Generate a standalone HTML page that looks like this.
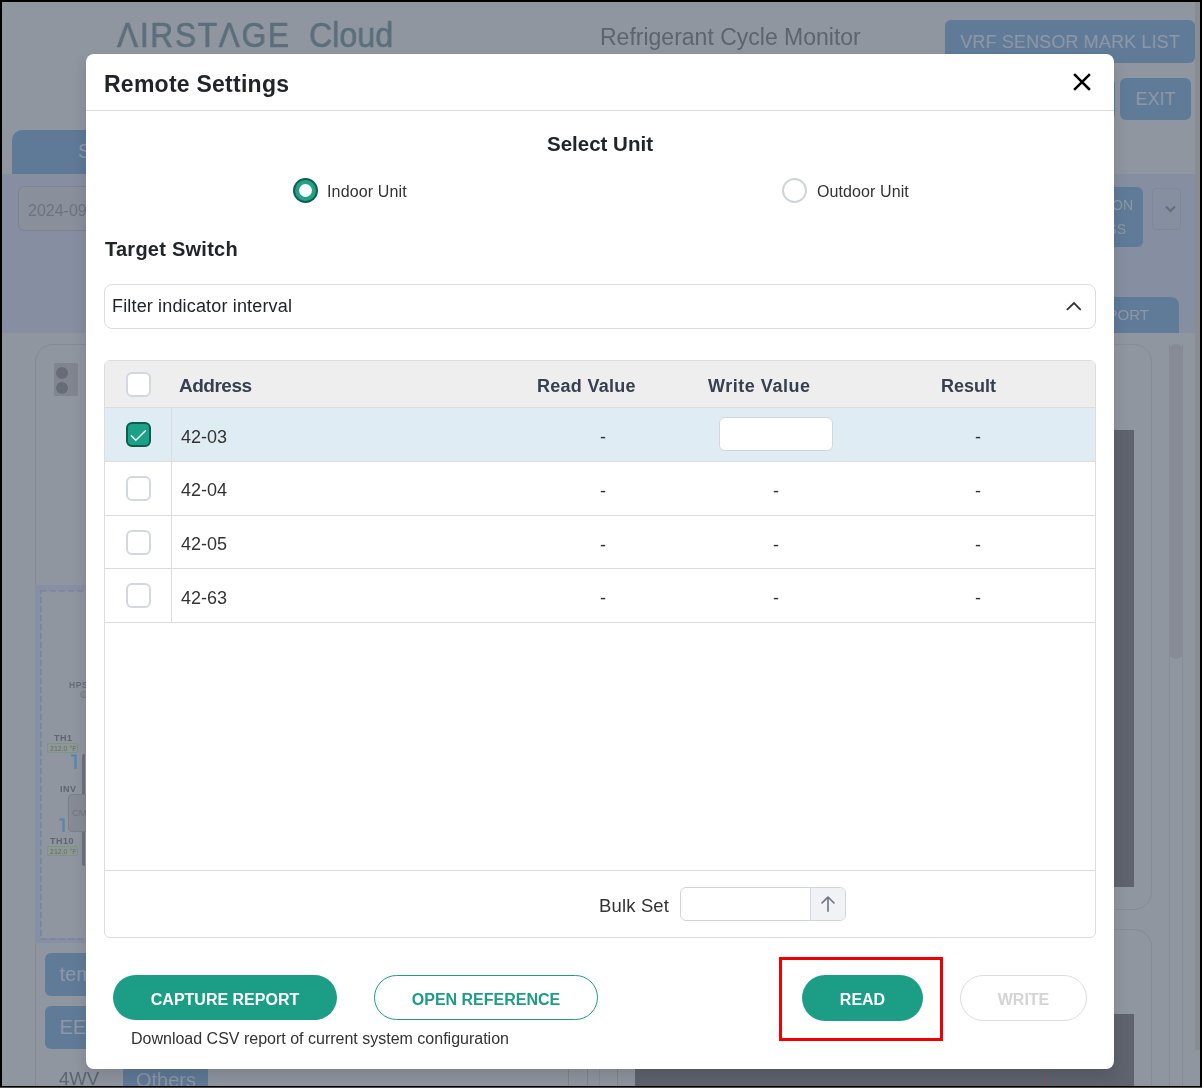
<!DOCTYPE html>
<html><head><meta charset="utf-8">
<style>.t{will-change:transform}
*{box-sizing:border-box;margin:0;padding:0}
html,body{width:1202px;height:1088px;overflow:hidden;background:#000}
body{position:relative;font-family:"Liberation Sans",sans-serif}
.a{position:absolute}
#page{position:absolute;left:2px;top:2px;width:1198px;height:1084px;background:#9096a0;overflow:hidden}
.bbtn{position:absolute;background:#607b98;border-radius:6px;color:#8e97a5;font-size:18px;white-space:nowrap}
#modal{position:absolute;left:86px;top:54px;width:1028px;height:1015px;background:#fff;border-radius:8px;overflow:hidden;box-shadow:0 8px 16px rgba(0,0,0,.13)}
.t{position:absolute;white-space:nowrap;line-height:1}
</style></head>
<body>
<div id="page">
  <!-- header -->
  <div class="t" style="left:114.8px;top:15.4px;font-size:35px;color:#5a6f7b;letter-spacing:2px;transform:scaleX(0.9);transform-origin:0 0;-webkit-text-stroke:0.7px #5a6f7b">ΛIRSTΛGE</div>
  <div class="t" style="left:307px;top:15.4px;font-size:35px;color:#5a6f7b;transform:scaleX(0.92);transform-origin:0 0;-webkit-text-stroke:0.6px #5a6f7b">Cloud</div>
  <div class="t" style="left:598px;top:24px;font-size:23px;color:#5c6470">Refrigerant Cycle Monitor</div>
  <div class="bbtn" style="left:943px;top:18px;width:250px;height:43px;line-height:45px;text-align:center;letter-spacing:0.13px">VRF SENSOR MARK LIST</div>
  <div class="bbtn" style="left:1040px;top:76px;width:73px;height:42px"></div>
  <div class="bbtn" style="left:1118px;top:76px;width:71px;height:42px;line-height:42px;text-align:center">EXIT</div>
  <!-- tab -->
  <div class="a" style="left:9.5px;top:128px;width:200px;height:44px;background:#5f7a97;border-radius:10px 10px 0 0"></div>
  <div class="t" style="left:76px;top:139px;font-size:20px;color:#8e97a5">S</div>
  <!-- band -->
  <div class="a" style="left:0;top:172px;width:1193px;height:159px;background:#858fa1"></div>
  <div class="a" style="left:16px;top:184px;width:120px;height:45px;border:1px solid #7c8391;border-radius:6px;background:#8a909b"></div>
  <div class="t" style="left:26px;top:200.5px;font-size:16px;color:#6e737d">2024-09-01</div>
  <div class="bbtn" style="left:1000px;top:185px;width:141px;height:60px"></div>
  <div class="t" style="left:1031px;top:195.5px;width:100px;text-align:right;font-size:14px;color:#8e97a5">SON</div><div class="t" style="left:1024px;top:219.5px;width:100px;text-align:right;font-size:14px;color:#8e97a5">SS</div>
  <div class="a" style="left:1150px;top:186px;width:29px;height:42px;border:1px solid #7f8898;border-radius:4px;background:#868fa0"></div>
  <svg class="a" style="left:1162px;top:202px" width="13" height="10" viewBox="0 0 13 10"><path d="M2 2.5 L6.5 7 L11 2.5" fill="none" stroke="#676e7b" stroke-width="2"/></svg>
  <div class="bbtn" style="left:1000px;top:295px;width:177px;height:36px;border-radius:8px 8px 0 0"></div>
  <div class="t" style="left:1046.5px;top:305.4px;width:100px;text-align:right;font-size:15px;color:#8e97a5">PORT</div>
  <!-- left card -->
  <div class="a" style="left:32.5px;top:342px;width:534px;height:760px;border:1px solid #848993;border-radius:18px"></div>
  <div class="a" style="left:33px;top:583px;width:533px;height:358px;background:#868fa4"></div>
  <div class="a" style="left:39px;top:589px;width:521px;height:347px;background:#9096a0"></div>
  <svg class="a" style="left:38px;top:588px" width="524" height="350"><rect x="1" y="1" width="522" height="348" fill="none" stroke="#74809c" stroke-width="1.2" stroke-dasharray="6 3"/></svg>
  <!-- outdoor unit icon -->
  <div class="a" style="left:52px;top:361px;width:24px;height:33px;background:#818590;border-radius:1px"></div>
  <div class="a" style="left:53.5px;top:364.5px;width:12px;height:12px;background:#676c78;border-radius:50%"></div>
  <div class="a" style="left:53.5px;top:380px;width:12px;height:12px;background:#676c78;border-radius:50%"></div>
  <!-- diagram bits -->
  <div class="t" style="left:67px;top:679px;font-size:8.5px;font-weight:bold;letter-spacing:0.6px;color:#666b75">HPS</div>
  <div class="a" style="left:78px;top:689px;width:20px;height:7px;background:#878c96;border-radius:4px;border:1px solid #7b808a"></div>
  <div class="t" style="left:52px;top:732px;font-size:9px;font-weight:bold;letter-spacing:0.5px;color:#60656f">TH1</div>
  <div class="a" style="left:45px;top:741px;width:31px;height:10px;background:#8d9a93;border:1px solid #7e9486;border-radius:2px"></div>
  <div class="t" style="left:48px;top:742.5px;font-size:7px;color:#666b73">212.0 °F</div>
  <svg class="a" style="left:68px;top:752px" width="8" height="16" viewBox="0 0 8 16"><path d="M1 1.5 H5.5 V15" fill="none" stroke="#5c86b0" stroke-width="2.5"/></svg>
  <div class="a" style="left:80px;top:752px;width:3px;height:112px;background:#6e737d;border-radius:2px 0 0 2px"></div>
  <div class="t" style="left:58px;top:783px;font-size:9px;font-weight:bold;letter-spacing:0.5px;color:#60656f">INV</div>
  <div class="a" style="left:66px;top:792px;width:26px;height:38px;background:#868b95;border:1px solid #7a7f89;border-radius:4px"></div>
  <div class="t" style="left:70px;top:806px;font-size:9.5px;color:#72777f">CM</div>
  <svg class="a" style="left:57px;top:816px" width="8" height="15" viewBox="0 0 8 15"><path d="M0.5 1.5 H4.5 V14" fill="none" stroke="#5c86b0" stroke-width="2.5"/></svg>
  <div class="t" style="left:48px;top:835px;font-size:9px;font-weight:bold;letter-spacing:0.5px;color:#60656f">TH10</div>
  <div class="a" style="left:45px;top:844px;width:31px;height:10px;background:#8d9a93;border:1px solid #7e9486;border-radius:2px"></div>
  <div class="t" style="left:48px;top:845.5px;font-size:7px;color:#666b73">212.0 °F</div>
  <!-- right cards -->
  <div class="a" style="left:597px;top:342px;width:553px;height:566px;border:1px solid #868b96;border-radius:18px"></div>
  <div class="a" style="left:597px;top:927px;width:553px;height:300px;border:1px solid #868b96;border-radius:18px"></div>
  <div class="a" style="left:566px;top:1060px;width:1px;height:30px;background:#80858f"></div>
  <div class="a" style="left:585px;top:1060px;width:1px;height:30px;background:#80858f"></div>
  <div class="a" style="left:615px;top:1060px;width:1px;height:30px;background:#80858f"></div>
  <div class="a" style="left:633px;top:428px;width:499px;height:457px;background:#5e636e"></div>
  <div class="a" style="left:633px;top:1012px;width:499px;height:80px;background:#5e636e"></div>
  <div class="a" style="left:1041.5px;top:1012px;width:1px;height:80px;background:#8a5060"></div>
  
  <!-- scroll tracks -->
  <div class="a" style="left:1167px;top:342px;width:1px;height:760px;background:#868b95"></div>
  <div class="a" style="left:1180px;top:342px;width:1px;height:760px;background:#868b95"></div>
  <div class="a" style="left:1167px;top:342px;width:14px;height:315px;background:#878b96;border-radius:7px"></div>
  <div class="a" style="left:1193px;top:0;width:5px;height:1048px;background:#888c93"></div>
  <!-- left bottom buttons -->
  <div class="bbtn" style="left:43px;top:951px;width:200px;height:43px;line-height:43px;padding-left:14.5px;font-size:20px">temp</div>
  <div class="bbtn" style="left:43px;top:1004px;width:200px;height:43px;line-height:43px;padding-left:14.5px;font-size:20px">EEV</div>
  <div class="t" style="left:57px;top:1068px;font-size:18.5px;color:#5c6470">4WV</div>
  <div class="a" style="left:121px;top:1067px;width:85px;height:30px;background:#607b98"></div>
  <div class="t" style="left:134px;top:1068px;font-size:20px;color:#8e97a5">Others</div>
</div>

<div class="a" style="left:0;top:1087px;width:1202px;height:1px;background:#4d4d4d"></div>
<div id="modal">
  <div class="t" style="left:18px;top:19px;font-size:23px;letter-spacing:0.25px;font-weight:bold;color:#212529">Remote Settings</div>
  <svg class="a" style="left:986px;top:18px" width="20" height="20" viewBox="0 0 20 20"><path d="M3 3 L17 17 M17 3 L3 17" stroke="#000" stroke-width="2.5" stroke-linecap="square"/></svg>
  <div class="a" style="left:0;top:56px;width:1028px;height:1px;background:#dcdcdc"></div>
  <div class="t" style="left:0;top:80px;width:1028px;text-align:center;font-size:20.5px;font-weight:bold;color:#212529">Select Unit</div>
  <div class="a" style="left:206.5px;top:124px;width:25px;height:25px;border-radius:50%;background:#105e50"></div>
  <div class="a" style="left:208.5px;top:126px;width:21px;height:21px;border-radius:50%;background:#1ea389"></div>
  <div class="a" style="left:212.5px;top:130px;width:13px;height:13px;border-radius:50%;background:#fff"></div>
  <div class="t" style="left:241px;top:130px;font-size:16px;letter-spacing:0.15px;color:#333">Indoor Unit</div>
  <div class="a" style="left:696px;top:124px;width:25px;height:25px;border-radius:50%;border:2px solid #ced4da;background:#fff"></div>
  <div class="t" style="left:731px;top:130px;font-size:16px;letter-spacing:0.1px;color:#333">Outdoor Unit</div>
  <div class="t" style="left:19px;top:185px;font-size:20px;letter-spacing:0.25px;font-weight:bold;color:#212529">Target Switch</div>
  <div class="a" style="left:18px;top:229.5px;width:992px;height:45px;border:1.5px solid #dcdcdc;border-radius:8px"></div>
  <div class="t" style="left:26px;top:243px;font-size:18px;letter-spacing:0.16px;color:#212529">Filter indicator interval</div>
  <svg class="a" style="left:978px;top:246px" width="18" height="12" viewBox="0 0 18 12"><path d="M3.4 9.4 L10 3 L16.2 9.4" fill="none" stroke="#333" stroke-width="1.8" stroke-linecap="round"/></svg>

  <div id="tbl" class="a" style="left:18px;top:306px;width:992px;height:578px;border:1px solid #dcdcdc;border-radius:6px;overflow:hidden">
    <div class="a" style="left:0;top:0;width:990px;height:46px;background:#eeeeee"></div>
    <div class="a" style="left:21px;top:11px;width:25px;height:25px;border:2px solid #d3d8e0;border-radius:6px;background:#fff"></div>
    <div class="t" style="left:74px;top:14.5px;font-size:19px;letter-spacing:-0.5px;font-weight:bold;color:#36404f">Address</div>
    <div class="t" style="left:432px;top:16px;letter-spacing:0.28px;font-size:18px;font-weight:bold;color:#36404f">Read Value</div>
    <div class="t" style="left:603px;top:16px;letter-spacing:0.53px;font-size:18px;font-weight:bold;color:#36404f">Write Value</div>
    <div class="t" style="left:836px;top:16px;font-size:18px;font-weight:bold;color:#36404f">Result</div>
    <div class="a" style="left:0;top:46px;width:990px;height:54px;background:#e0ecf4;border-top:1px solid #dcdcdc"></div>
<div class="a" style="left:66px;top:46px;width:1px;height:54px;background:#dcdcdc"></div>
<div class="a" style="left:21px;top:61px;width:25px;height:25px;border:2px solid #0b5e4e;border-radius:6px;background:#1ba188"></div>
<svg class="a" style="left:21px;top:61px" width="25" height="25" viewBox="0 0 25 25"><path d="M5.3 13.8 L9.8 18.3 L19.4 8.7" fill="none" stroke="#fff" stroke-width="1.3" stroke-linecap="round"/></svg>
<div class="a" style="left:614px;top:56px;width:114px;height:34px;border:1px solid #d3d6db;border-radius:6px;background:#fff"></div>
<div class="t" style="left:76px;top:66.5px;font-size:18px;color:#333">42-03</div>
<div class="t" style="left:493px;top:67px;width:10px;text-align:center;font-size:18px;color:#333">-</div>
<div class="t" style="left:868px;top:67px;width:10px;text-align:center;font-size:18px;color:#333">-</div>
<div class="a" style="left:0;top:99.75px;width:990px;height:54px;background:#fff;border-top:1px solid #dcdcdc"></div>
<div class="a" style="left:66px;top:99.75px;width:1px;height:54px;background:#dcdcdc"></div>
<div class="a" style="left:21px;top:114.75px;width:25px;height:25px;border:2px solid #d3d8e0;border-radius:6px;background:#fff"></div>
<div class="t" style="left:665.5px;top:120.75px;width:10px;text-align:center;font-size:18px;color:#333">-</div>
<div class="t" style="left:76px;top:120.25px;font-size:18px;color:#333">42-04</div>
<div class="t" style="left:493px;top:120.75px;width:10px;text-align:center;font-size:18px;color:#333">-</div>
<div class="t" style="left:868px;top:120.75px;width:10px;text-align:center;font-size:18px;color:#333">-</div>
<div class="a" style="left:0;top:153.5px;width:990px;height:54px;background:#fff;border-top:1px solid #dcdcdc"></div>
<div class="a" style="left:66px;top:153.5px;width:1px;height:54px;background:#dcdcdc"></div>
<div class="a" style="left:21px;top:168.5px;width:25px;height:25px;border:2px solid #d3d8e0;border-radius:6px;background:#fff"></div>
<div class="t" style="left:665.5px;top:174.5px;width:10px;text-align:center;font-size:18px;color:#333">-</div>
<div class="t" style="left:76px;top:174px;font-size:18px;color:#333">42-05</div>
<div class="t" style="left:493px;top:174.5px;width:10px;text-align:center;font-size:18px;color:#333">-</div>
<div class="t" style="left:868px;top:174.5px;width:10px;text-align:center;font-size:18px;color:#333">-</div>
<div class="a" style="left:0;top:207.25px;width:990px;height:54px;background:#fff;border-top:1px solid #dcdcdc"></div>
<div class="a" style="left:66px;top:207.25px;width:1px;height:54px;background:#dcdcdc"></div>
<div class="a" style="left:21px;top:222.25px;width:25px;height:25px;border:2px solid #d3d8e0;border-radius:6px;background:#fff"></div>
<div class="t" style="left:665.5px;top:228.25px;width:10px;text-align:center;font-size:18px;color:#333">-</div>
<div class="t" style="left:76px;top:227.75px;font-size:18px;color:#333">42-63</div>
<div class="t" style="left:493px;top:228.25px;width:10px;text-align:center;font-size:18px;color:#333">-</div>
<div class="t" style="left:868px;top:228.25px;width:10px;text-align:center;font-size:18px;color:#333">-</div>
<div class="a" style="left:0;top:261px;width:990px;height:1px;background:#dcdcdc"></div>

    <div class="a" style="left:0;top:509px;width:990px;height:1px;background:#dcdcdc"></div>
    <div class="t" style="left:494px;top:536px;font-size:18.5px;letter-spacing:0.15px;color:#333">Bulk Set</div>
    <div class="a" style="left:575px;top:525.5px;width:166px;height:34px;border:1px solid #d1d5db;border-radius:6px;overflow:hidden;background:#fff">
      <div class="a" style="left:129px;top:0;width:36px;height:32px;background:#f1f2f5;border-left:1px solid #d9dce1"></div>
    </div>
    <svg class="a" style="left:713px;top:534px" width="20" height="20" viewBox="0 0 20 20"><path d="M10 16.2 V2 M4 8 L10 2 L16 8" fill="none" stroke="#6b7280" stroke-width="1.6" stroke-linecap="round" stroke-linejoin="round"/></svg>
  </div>

  <div class="a" style="left:27px;top:921px;width:224px;height:45px;border-radius:23px;background:#1c9e86"></div>
  <div class="t" style="left:27px;top:938px;width:224px;text-align:center;font-size:16px;font-weight:bold;color:#fff">CAPTURE REPORT</div>
  <div class="a" style="left:287.5px;top:921px;width:224px;height:45px;border-radius:23px;border:1.5px solid #1c9e86;background:#fff"></div>
  <div class="t" style="left:287.5px;top:938px;width:224px;text-align:center;font-size:16px;font-weight:bold;color:#1c9e86">OPEN REFERENCE</div>
  <div class="t" style="left:45px;top:977px;font-size:16px;color:#333">Download CSV report of current system configuration</div>
  <div class="a" style="left:716px;top:921px;width:121px;height:46px;border-radius:23px;background:#1c9e86"></div>
  <div class="t" style="left:716px;top:938px;width:121px;text-align:center;font-size:16px;font-weight:bold;color:#fff">READ</div>
  <div class="a" style="left:692.5px;top:902.5px;width:164px;height:84px;border:3px solid #f20000"></div>
  <div class="a" style="left:874px;top:921px;width:127px;height:46px;border-radius:23px;border:1.5px solid #dcdcdc;background:#fff"></div>
  <div class="t" style="left:874px;top:938px;width:127px;text-align:center;font-size:16px;font-weight:bold;color:#d4d4d4">WRITE</div>
</div>
</body></html>
